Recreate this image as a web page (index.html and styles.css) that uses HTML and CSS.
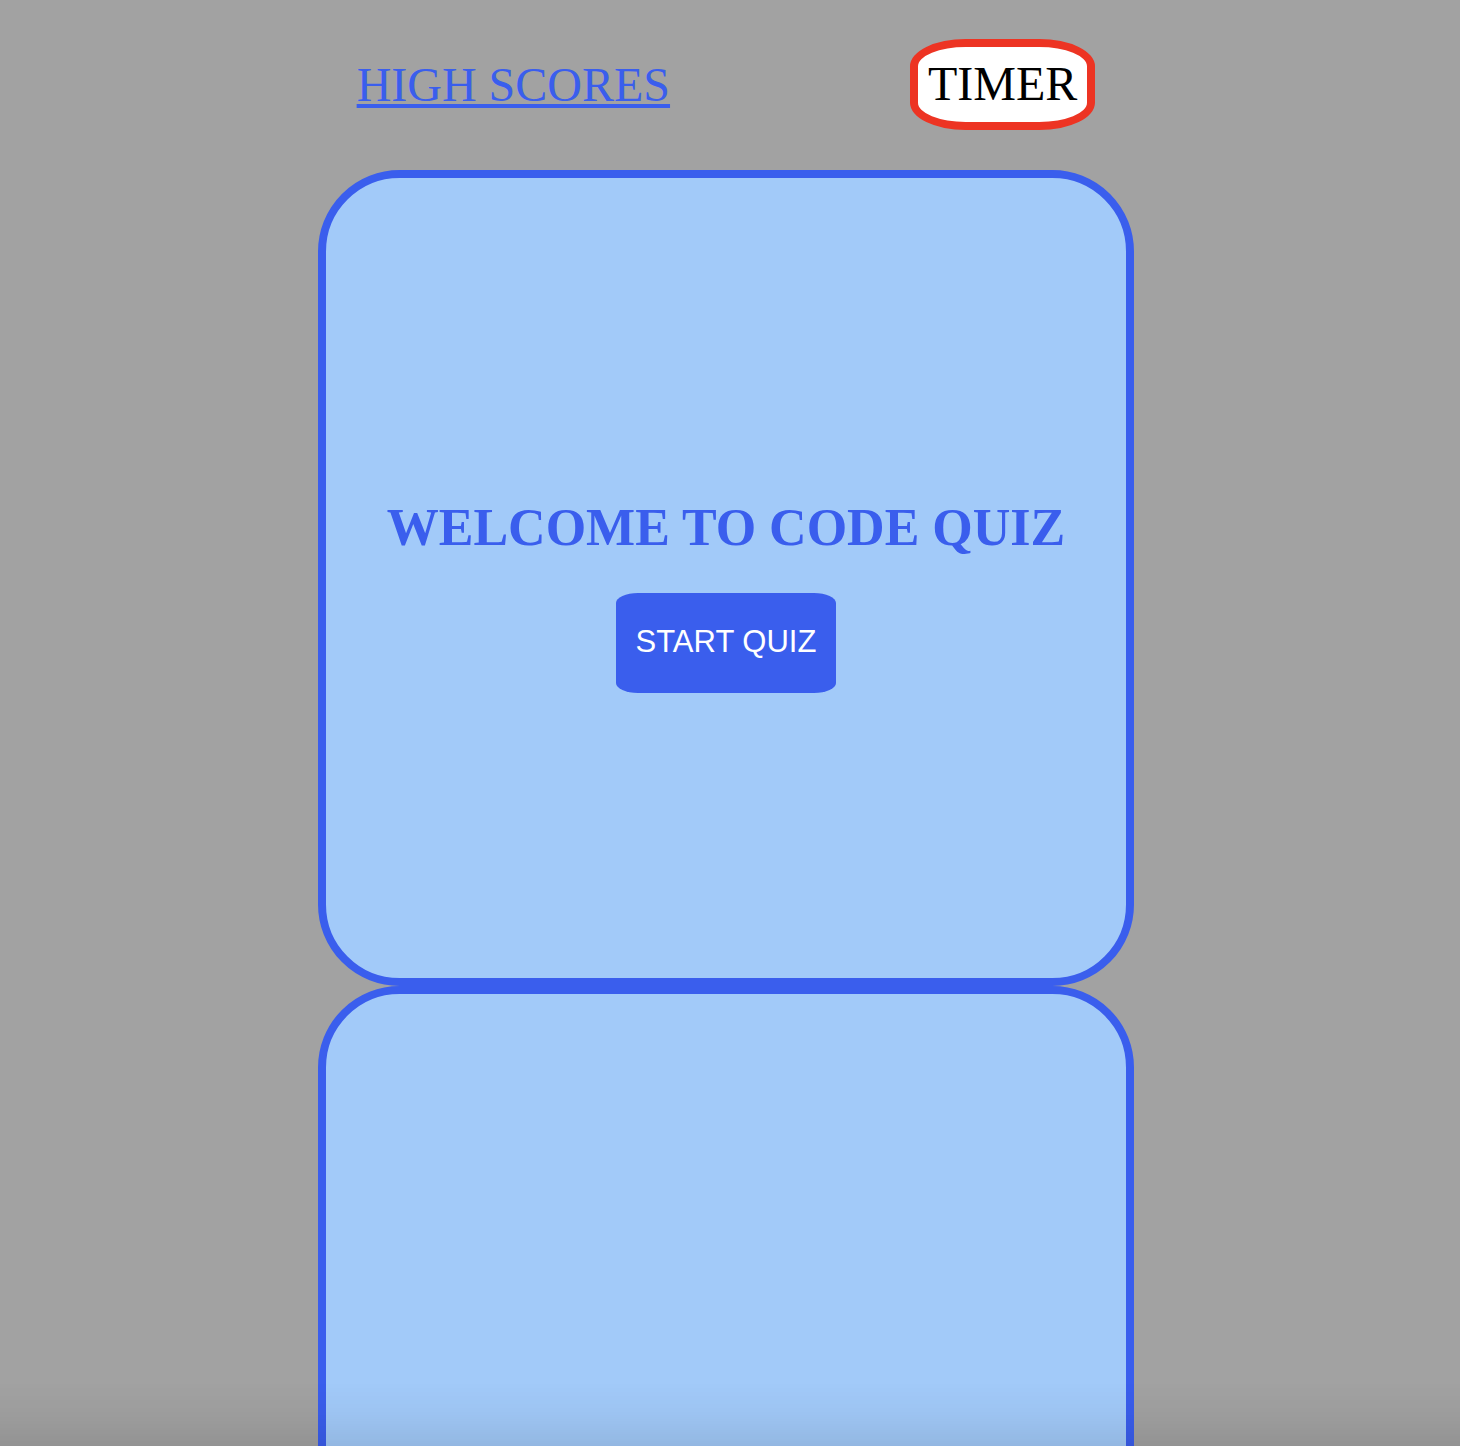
FILE: index.html
```html
<!DOCTYPE html>
<html lang="en">
<head>
  <meta charset="utf-8">
  <meta name="viewport" content="width=device-width, initial-scale=1">
  <title>Code Quiz</title>
  <link rel="stylesheet" href="styles.css">
</head>
<body>
  <header class="header">
    <a class="scores-link" href="#scores">HIGH SCORES</a>
    <div class="timer">TIMER</div>
  </header>
  <main class="cards">
    <section class="card">
      <h1 class="title">WELCOME TO CODE QUIZ</h1>
      <button class="start-button" type="button">START QUIZ</button>
    </section>
    <section class="card"></section>
  </main>
</body>
</html>
```

FILE: styles.css
```css
* {
  box-sizing: border-box;
}

html {
  height: 100%;
  scrollbar-width: none;
}

body {
  height: 100%;
  margin: 0;
  padding-right: 8px;
  overflow: auto;
  scrollbar-width: none;
  background: #a2a2a2;
  font-family: "Liberation Serif", "Times New Roman", serif;
}

/* Soft shade along the bottom edge of the window */
body::after {
  content: "";
  position: fixed;
  inset: auto 0 0;
  height: 64px;
  background: linear-gradient(transparent, rgba(0, 0, 0, 0.03) 50%, rgba(0, 0, 0, 0.09));
  pointer-events: none;
}

.header {
  display: flex;
  flex-wrap: wrap;
  justify-content: center;
  align-items: center;
  gap: 20px 240px;
  padding: 39px 0 40px;
  font-size: 48px;
  line-height: 55px;
}

.scores-link {
  color: #3a5eed;
}

.timer {
  padding: 9px 10px 11px;
  border: 8px solid #ed3423;
  border-radius: 30%;
  background: #fff;
  color: #000;
}

.cards {
  display: flex;
  flex-direction: column;
  align-items: center;
}

.card {
  display: flex;
  flex-direction: column;
  justify-content: center;
  align-items: center;
  gap: 35px;
  flex: none;
  width: 100%;
  max-width: 816px;
  aspect-ratio: 1;
  padding: 55px 20px 20px;
  border: 8px solid #3a5eed;
  border-radius: 10%;
  background: #a2caf9;
}

.title {
  margin: 0;
  color: #3a5eed;
  font-size: 52px;
  line-height: 60px;
  text-align: center;
}

.start-button {
  width: 220px;
  height: 100px;
  padding: 0 0 2px;
  border: 0;
  border-radius: 10%;
  background: #3a5eed;
  color: #fff;
  font-family: "Liberation Sans", Arial, sans-serif;
  font-size: 31px;
}
```
